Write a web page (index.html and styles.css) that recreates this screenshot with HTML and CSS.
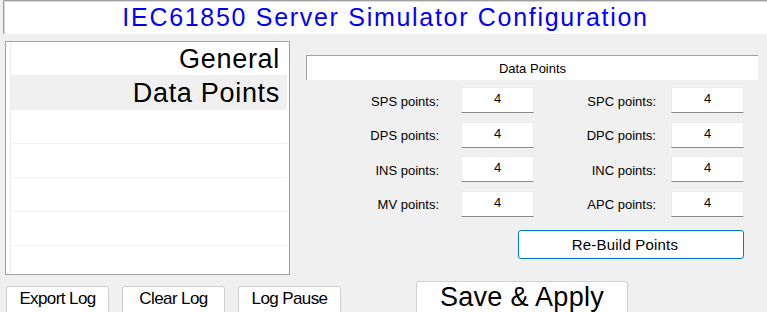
FILE: index.html
```html
<!DOCTYPE html>
<html lang="en">
<head>
  <meta charset="UTF-8" />
  <title>IEC61850 Server Simulator Configuration</title>
  <link rel="stylesheet" href="styles.css">
</head>
<body>

  <div class="title">IEC61850 Server Simulator Configuration</div>

  <div class="main">
    <div class="nav-box">
      <ul class="nav">
        <li>General</li>
        <li class="active">Data Points</li>
        <li></li>
        <li></li>
        <li></li>
        <li></li>
        <li></li>
      </ul>
    </div>

    <div class="panel">
      <div class="panel-head">Data Points</div>

      <div class="points">
        <label class="lbl">SPS points:</label>
        <input class="num" type="text" value="4">
        <label class="lbl lbl-r">SPC points:</label>
        <input class="num" type="text" value="4">

        <label class="lbl">DPS points:</label>
        <input class="num" type="text" value="4">
        <label class="lbl lbl-r">DPC points:</label>
        <input class="num" type="text" value="4">

        <label class="lbl">INS points:</label>
        <input class="num" type="text" value="4">
        <label class="lbl lbl-r">INC points:</label>
        <input class="num" type="text" value="4">

        <label class="lbl">MV points:</label>
        <input class="num" type="text" value="4">
        <label class="lbl lbl-r">APC points:</label>
        <input class="num" type="text" value="4">
      </div>

      <button class="rebuild">Re-Build Points</button>
    </div>
  </div>

  <div class="bottom">
    <button class="log-btn">Export Log</button>
    <button class="log-btn">Clear Log</button>
    <button class="log-btn">Log Pause</button>
    <button class="save">Save &amp; Apply</button>
  </div>

</body>
</html>
```

FILE: styles.css
```css
body {
  margin: 0;
  overflow: hidden;
  background-color: #f0f0f0;
  font-family: "Liberation Sans", Arial, sans-serif;
  color: #000;
}

.title {
  margin-left: 3px;
  height: 34px;
  box-sizing: border-box;
  background-color: #fff;
  border-top: 1px solid #a0a0a0;
  border-left: 1px solid #a0a0a0;
  box-shadow: inset 1px 1px 0 #d6d6d6;
  color: #0000ff;
  font-size: 25px;
  letter-spacing: 1.7px;
  line-height: 33px;
  text-align: center;
}

.main {
  display: flex;
  margin-top: 7px;
}

/* left list */
.nav-box {
  margin-left: 5px;
  width: 285px;
  height: 234px;
  box-sizing: border-box;
  border: 1px solid #a0a0a0;
  background-color: #fff;
  padding: 0 2px 0 4px;
  overflow: hidden;
}

.nav {
  list-style: none;
  margin: 0;
  padding: 0;
  border-left: 1px solid #ececec;
  height: 100%;
}

.nav li {
  height: 34px;
  box-sizing: border-box;
  border-bottom: 1px solid #f0f0f0;
  padding-right: 7px;
  text-align: right;
  font-size: 27px;
  letter-spacing: 0.7px;
  line-height: 34px;
}

.nav li.active {
  background-color: #f0f0f0;
}

/* right panel */
.panel {
  margin-left: 16px;
  padding-top: 14px;
}

.panel-head {
  width: 452px;
  height: 25px;
  box-sizing: border-box;
  background-color: #fff;
  border-top: 1px solid #a0a0a0;
  border-left: 1px solid #a0a0a0;
  font-size: 13px;
  line-height: 25px;
  text-align: center;
}

.points {
  display: grid;
  grid-template-columns: 155px 73px 137px 73px;
  grid-auto-rows: 26px;
  row-gap: 8.6px;
  margin-top: 7px;
  align-items: center;
}

.lbl {
  text-align: right;
  padding-right: 22px;
  font-size: 13px;
  padding-top: 2px;
}

.lbl-r {
  padding-right: 15px;
}

.num {
  width: 73px;
  height: 26px;
  box-sizing: border-box;
  margin: 0;
  padding: 0 0 3px;
  border: 1px solid #ebebeb;
  border-bottom: 1px solid #8a8a8a;
  background-color: #fff;
  font-family: "Liberation Sans", Arial, sans-serif;
  font-size: 13px;
  text-align: center;
  outline: none;
}

.rebuild {
  display: block;
  margin: 13px 0 0 212px;
  width: 226px;
  height: 29px;
  background-color: #fff;
  border: 1px solid #0078d7;
  border-radius: 3px;
  font-family: "Liberation Sans", Arial, sans-serif;
  font-size: 15px;
  letter-spacing: 0.2px;
  color: #000;
  padding: 0 12px 0 0;
}

/* bottom buttons */
.bottom {
  display: flex;
  align-items: flex-start;
  margin-top: 1px;
  padding-left: 6px;
}

.log-btn {
  margin-top: 10px;
  margin-right: 13px;
  width: 103px;
  height: 30px;
  padding: 0 0 4px;
  background-color: #fff;
  border: 1px solid #cfcfcf;
  border-radius: 3px;
  font-family: "Liberation Sans", Arial, sans-serif;
  font-size: 17px;
  letter-spacing: -0.6px;
  color: #000;
}

.save {
  margin-top: 5px;
  margin-left: 62px;
  width: 212px;
  height: 40px;
  padding: 0 0 8px;
  background-color: #fff;
  border: 1px solid #d0d0d0;
  border-radius: 3px;
  font-family: "Liberation Sans", Arial, sans-serif;
  font-size: 27px;
  letter-spacing: 0.3px;
  color: #000;
}
```
